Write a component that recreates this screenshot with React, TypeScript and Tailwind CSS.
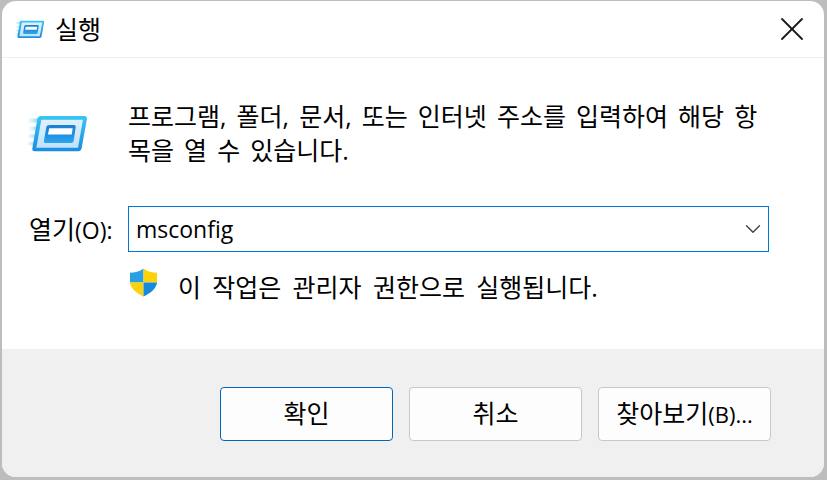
import type { ReactNode } from 'react'
import { X, ChevronDown } from 'lucide-react'

const font = { fontFamily: '"Open Sans", "Noto Sans CJK KR", sans-serif' }

// drawn on a 3x grid of the 62x38 icon
function RunIcon({ width, height, className }: { width: number; height: number; className?: string }) {
  return (
    <svg width={width} height={height} viewBox="50 45 185 115" className={className}>
      <defs>
        <linearGradient id="run-frame" x1="0" y1="0" x2="0" y2="1">
          <stop offset="0" stopColor="#38c6f4" />
          <stop offset="1" stopColor="#1c8cdf" />
        </linearGradient>
        <linearGradient id="run-panel" x1="0" y1="0" x2="0" y2="1">
          <stop offset="0" stopColor="#def1fb" />
          <stop offset="1" stopColor="#c0e2f8" />
        </linearGradient>
        <linearGradient id="run-slot" x1="0" y1="0" x2="0" y2="1">
          <stop offset="0" stopColor="#1f7fd0" />
          <stop offset="0.5" stopColor="#1f8ee0" />
          <stop offset="1" stopColor="#2ba6ee" />
        </linearGradient>
        <linearGradient id="run-trail" x1="0" y1="0" x2="1" y2="0">
          <stop offset="0" stopColor="#bfe6f8" stopOpacity="0.2" />
          <stop offset="1" stopColor="#8fd6f5" />
        </linearGradient>
      </defs>
      <g fill="url(#run-trail)">
        <rect x="52" y="55" width="32" height="13" />
        <rect x="56" y="80" width="24" height="12" />
        <rect x="52" y="103" width="26" height="12" />
        <rect x="50" y="126" width="24" height="11" />
      </g>
      <path d="M90 48 H222 Q231 48 230 57 L214 146 Q212 155 203 155 H72 Q63 155 65 146 L80 56 Q82 48 90 48 Z" fill="url(#run-frame)" />
      <path d="M92 59 H218 L203 144 H77 Z" fill="url(#run-panel)" />
      <path d="M118 75 H190 Q197 75 196 82 L190 123 Q189 130 182 130 H106 Q99 130 100 123 L107 82 Q108 75 118 75 Z" fill="url(#run-slot)" />
      <path d="M116 85 H187 L184 104 H112 Z" fill="#ffffff" />
    </svg>
  )
}

function ShieldIcon() {
  return (
    <svg width="29" height="29" viewBox="0 0 30 30" className="-mt-px shrink-0">
      <path d="M15 0.500 C11 3.500 6 5 1 5 V15 H15 Z" fill="#2a9fe3" />
      <path d="M15 0.500 C19 3.500 24 5 29 5 V15 H15 Z" fill="#fdd20a" />
      <path d="M1 15 H15 V29.500 C8 26 2 22 1 15 Z" fill="#fdd20a" />
      <path d="M29 15 H15 V29.500 C22 26 28 22 29 15 Z" fill="#1689df" />
    </svg>
  )
}

function DialogButton({ label, primary }: { label: ReactNode; primary?: boolean }) {
  return (
    <button
      className={
        primary
          ? 'flex h-[54px] w-[173px] items-center justify-center rounded-[4px] border-[1.5px] border-[#0067c0] bg-[#fdfdfd] text-[25px] text-black'
          : 'flex h-[54px] w-[173px] items-center justify-center rounded-[4px] border border-[#c8c8c8] bg-[#fdfdfd] text-[25px] text-black'
      }
    >
      {label}
    </button>
  )
}

export default function App() {
  return (
    <div className="h-[480px] w-[827px] overflow-hidden bg-[#bdbdbd] pt-px pr-[3px] pb-[3px] pl-[2px]" style={font}>
      <div className="flex h-full flex-col overflow-hidden rounded-[14px] bg-white">
        {/* Title bar */}
        <div className="flex h-[57px] shrink-0 items-center justify-between border-b border-[#f0f0f0] pr-[12px] pl-[13px]">
          <div className="flex items-center gap-[10px]">
            <RunIcon width={30} height={19} className="shrink-0" />
            <span className="text-[25px] leading-none text-black">실행</span>
          </div>
          <X size={40} strokeWidth={1.1} className="text-[#1a1a1a]" />
        </div>

        {/* Body */}
        <div className="flex h-[291px] shrink-0 flex-col">
          <div className="flex items-start pt-[41px] pl-[25px]">
            <RunIcon width={62} height={38} className="mt-[16px] shrink-0" />
            <p className="ml-[39px] w-[640px] text-[25px] leading-[34px] text-black [word-spacing:3.6px]">
              프로그램, 폴더, 문서, 또는 인터넷 주소를 입력하여 해당 항목을 열 수 있습니다.
            </p>
          </div>
          <div className="mt-[39px] flex items-center pl-[27px]">
            <span className="w-[99px] pt-[2px] text-[25px] text-black">
              열기<span className="text-[23px]">(O):</span>
            </span>
            <div className="flex h-[46px] w-[641px] items-center justify-between border-[1.5px] border-[#0078d4] pr-[2px] pl-[7px]">
              <span className="pt-px text-[23px] text-black">msconfig</span>
              <ChevronDown size={26} strokeWidth={1.3} className="text-[#444444]" />
            </div>
          </div>
          <div className="mt-[17px] flex items-start pl-[127px]">
            <ShieldIcon />
            <span className="ml-[20px] text-[25px] text-black [word-spacing:4.8px]">이 작업은 관리자 권한으로 실행됩니다.</span>
          </div>
        </div>

        {/* Buttons */}
        <div className="flex flex-1 items-start justify-end gap-[16px] bg-[#f0f0f0] pt-[38px] pr-[53px]">
          <DialogButton label="확인" primary />
          <DialogButton label="취소" />
          <DialogButton
            label={
              <>
                찾아보기<span className="text-[22px]">(B)...</span>
              </>
            }
          />
        </div>
      </div>
    </div>
  )
}
